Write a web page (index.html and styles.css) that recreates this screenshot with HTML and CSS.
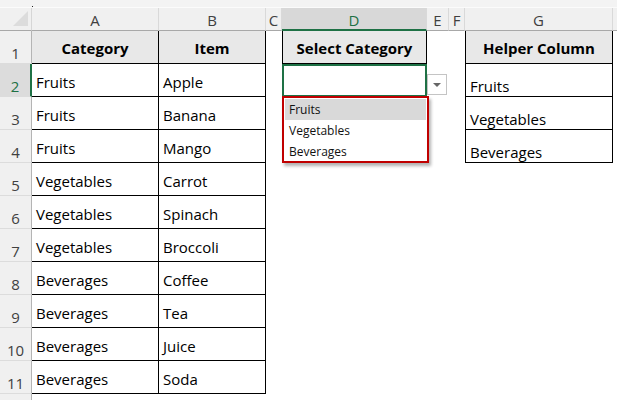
FILE: index.html
```html
<!DOCTYPE html>
<html>
<head>
<meta charset="utf-8">
<link rel="stylesheet" href="styles.css">
</head>
<body>
<div class="topbar"><span class="dot"></span></div>
<div class="sheet">
  <!-- column headers -->
  <div class="corner"><span class="tri"></span></div>
  <div class="ch">A</div>
  <div class="ch">B</div>
  <div class="ch">C</div>
  <div class="ch sel">D</div>
  <div class="ch">E</div>
  <div class="ch">F</div>
  <div class="ch">G</div>
  <div class="ch end"></div>

  <!-- row 1 -->
  <div class="rh">1</div>
  <div class="c b hd">Category</div>
  <div class="c b hd">Item</div>
  <div class="c"></div>
  <div class="c b bl hd">Select Category</div>
  <div class="c"></div>
  <div class="c"></div>
  <div class="c b bl hd">Helper Column</div>
  <div class="c"></div>

  <!-- row 2 -->
  <div class="rh rsel">2</div>
  <div class="c b">Fruits</div>
  <div class="c b">Apple</div>
  <div class="c"></div>
  <div class="c active">
    <div class="dropdown">
      <div class="list">
        <div class="opt hl">Fruits</div>
        <div class="opt">Vegetables</div>
        <div class="opt">Beverages</div>
      </div>
    </div>
  </div>
  <div class="c btncell"><span class="ddbtn"><span class="arrow"></span></span></div>
  <div class="c"></div>
  <div class="c b bl v">Fruits</div>
  <div class="c"></div>

  <!-- row 3 -->
  <div class="rh">3</div>
  <div class="c b">Fruits</div>
  <div class="c b">Banana</div>
  <div class="c"></div>
  <div class="c"></div>
  <div class="c"></div>
  <div class="c"></div>
  <div class="c b bl v">Vegetables</div>
  <div class="c"></div>

  <!-- row 4 -->
  <div class="rh">4</div>
  <div class="c b">Fruits</div>
  <div class="c b">Mango</div>
  <div class="c"></div>
  <div class="c"></div>
  <div class="c"></div>
  <div class="c"></div>
  <div class="c b bl v">Beverages</div>
  <div class="c"></div>

  <!-- row 5 -->
  <div class="rh">5</div>
  <div class="c b">Vegetables</div>
  <div class="c b">Carrot</div>
  <div class="c"></div><div class="c"></div><div class="c"></div><div class="c"></div><div class="c"></div><div class="c"></div>

  <!-- row 6 -->
  <div class="rh">6</div>
  <div class="c b">Vegetables</div>
  <div class="c b">Spinach</div>
  <div class="c"></div><div class="c"></div><div class="c"></div><div class="c"></div><div class="c"></div><div class="c"></div>

  <!-- row 7 -->
  <div class="rh">7</div>
  <div class="c b">Vegetables</div>
  <div class="c b">Broccoli</div>
  <div class="c"></div><div class="c"></div><div class="c"></div><div class="c"></div><div class="c"></div><div class="c"></div>

  <!-- row 8 -->
  <div class="rh">8</div>
  <div class="c b">Beverages</div>
  <div class="c b">Coffee</div>
  <div class="c"></div><div class="c"></div><div class="c"></div><div class="c"></div><div class="c"></div><div class="c"></div>

  <!-- row 9 -->
  <div class="rh">9</div>
  <div class="c b">Beverages</div>
  <div class="c b">Tea</div>
  <div class="c"></div><div class="c"></div><div class="c"></div><div class="c"></div><div class="c"></div><div class="c"></div>

  <!-- row 10 -->
  <div class="rh">10</div>
  <div class="c b">Beverages</div>
  <div class="c b">Juice</div>
  <div class="c"></div><div class="c"></div><div class="c"></div><div class="c"></div><div class="c"></div><div class="c"></div>

  <!-- row 11 -->
  <div class="rh">11</div>
  <div class="c b">Beverages</div>
  <div class="c b">Soda</div>
  <div class="c"></div><div class="c"></div><div class="c"></div><div class="c"></div><div class="c"></div><div class="c"></div>

  <!-- row 12 (partial) -->
  <div class="rh last"></div>
  <div class="c"></div><div class="c"></div><div class="c"></div><div class="c"></div><div class="c"></div><div class="c"></div><div class="c"></div><div class="c"></div>
</div>
</body>
</html>
```

FILE: styles.css
```css
* { box-sizing: border-box; }
html, body {
  margin: 0;
  padding: 0;
  width: 617px;
  height: 400px;
  overflow: hidden;
  background: #f3f3f3;
  font-family: "Open Sans", "Noto Sans", sans-serif;
}
.topbar {
  height: 8px;
  background: #f3f3f3;
  border-bottom: 1px solid #fbfbfb;
  position: relative;
}
.dot {
  position: absolute;
  left: 32px;
  top: 6px;
  width: 1px;
  height: 1px;
  background: #222;
}
.sheet {
  display: grid;
  grid-template-columns: 32px 127px 107px 16px 145px 22px 16px 148px 4px;
  grid-template-rows: 23px repeat(11, 33px) 1fr;
  height: 392px;
  background: #fff;
}
.corner {
  background: #f0f0f0;
  border-right: 1px solid #d6d6d6;
  border-bottom: 1px solid #a8a8a8;
  position: relative;
}
.tri {
  position: absolute;
  right: 3px;
  bottom: 4px;
  width: 0;
  height: 0;
  border-left: 15px solid transparent;
  border-bottom: 15px solid #dcdcdc;
}
.ch {
  background: #f0f0f0;
  border-right: 1px solid #d9d9d9;
  border-bottom: 1px solid #a8a8a8;
  color: #404040;
  font-size: 15px;
  display: flex;
  align-items: center;
  justify-content: center;
  padding-top: 2px;
}
.ch.sel {
  background: #d8d8d8;
  color: #1e7145;
  border-bottom: 2px solid #1e7145;
  padding-top: 3px;
}
.ch.end { border-right: none; }
.rh {
  background: #f0f0f0;
  border-right: 1px solid #b4b4b4;
  border-bottom: 1px solid #dcdcdc;
  color: #404040;
  font-size: 15px;
  display: flex;
  align-items: flex-end;
  justify-content: center;
  padding-bottom: 0;
  line-height: 20px;
}
.rh.rsel {
  background: #dcdcdc;
  color: #1e7145;
  border-right: 2px solid #1e7145;
}
.rh.last { border-bottom: none; }
.c {
  background: #fff;
  color: #000;
  font-size: 15px;
  display: flex;
  align-items: center;
  padding-left: 4px;
  padding-top: 3px;
  white-space: nowrap;
}
.b {
  border-right: 1px solid #000;
  border-bottom: 1px solid #000;
}
.bl { border-left: 1px solid #000; }
.hd {
  background: #e8e8e8;
  font-weight: 700;
  justify-content: center;
  padding-left: 0;
  padding-top: 1px;
}
.v {
  align-items: flex-end;
  padding-top: 0;
  padding-bottom: 0;
}
.active {
  position: relative;
  box-shadow: inset 0 0 0 2px #1e7145;
  padding: 0;
}
.btncell {
  align-items: flex-end;
  padding: 0 0 2px 0;
}
.ddbtn {
  width: 20px;
  height: 21px;
  border: 1px solid #c4c4c4;
  background: #fff;
  display: flex;
  align-items: center;
  justify-content: center;
}
.arrow {
  width: 0;
  height: 0;
  border-left: 4px solid transparent;
  border-right: 4px solid transparent;
  border-top: 4px solid #666;
}
.dropdown {
  position: absolute;
  left: 0;
  top: 32px;
  width: 147px;
  height: 67px;
  border: 2px solid #c00000;
  background: #fff;
  box-shadow: 2px 3px 3px rgba(0, 0, 0, 0.3);
  z-index: 5;
  padding: 1px 1px 0 1px;
}
.list {
  display: flex;
  flex-direction: column;
}
.opt {
  height: 21px;
  font-size: 12px;
  font-family: "Open Sans", "Noto Sans", sans-serif;
  display: flex;
  align-items: center;
  padding-left: 4px;
  color: #111;
}
.opt.hl { background: #d9d9d9; }
```
